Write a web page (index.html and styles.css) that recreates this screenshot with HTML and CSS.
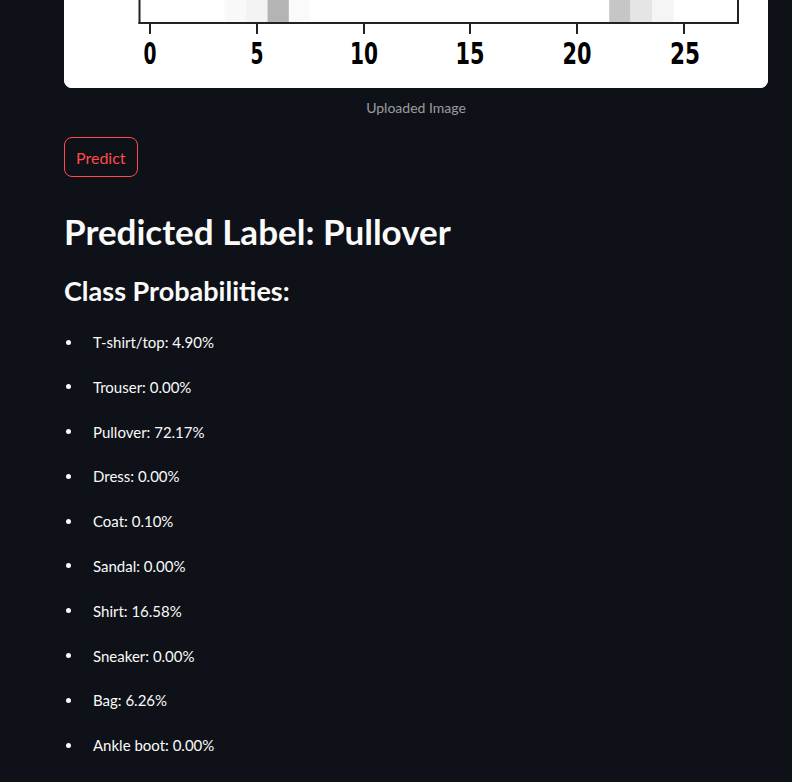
FILE: index.html
```html
<!DOCTYPE html>
<html lang="en">
<head>
<meta charset="utf-8">
<title>Fashion MNIST Classifier</title>
<link rel="stylesheet" href="styles.css">
</head>
<body>
<main class="main">
  <figure class="figure">
    <div class="plot-card">
      <svg class="plot" width="704" height="88" viewBox="0 0 704 88" xmlns="http://www.w3.org/2000/svg">
        <rect x="0" y="0" width="704" height="88" fill="#ffffff"/>
        <rect x="160.7" y="0" width="21.4" height="22" fill="#f9f9f9"/>
        <rect x="182.1" y="0" width="21.4" height="22" fill="#f3f3f3"/>
        <rect x="203.5" y="0" width="21.4" height="22" fill="#b4b4b4"/>
        <rect x="224.9" y="0" width="21.4" height="22" fill="#fafafa"/>
        <rect x="545.2" y="0" width="21.4" height="22" fill="#c6c6c6"/>
        <rect x="566.6" y="0" width="21.4" height="22" fill="#e5e5e5"/>
        <rect x="588" y="0" width="21.4" height="22" fill="#f5f5f5"/>
        <g stroke="#222222" stroke-width="2" fill="none">
          <line x1="75.5" y1="0" x2="75.5" y2="24"/>
          <line x1="674" y1="0" x2="674" y2="24"/>
          <line x1="74.5" y1="23" x2="675" y2="23"/>
          <line x1="86" y1="24" x2="86" y2="34"/>
          <line x1="193" y1="24" x2="193" y2="34"/>
          <line x1="300" y1="24" x2="300" y2="34"/>
          <line x1="406" y1="24" x2="406" y2="34"/>
          <line x1="513" y1="24" x2="513" y2="34"/>
          <line x1="620" y1="24" x2="620" y2="34"/>
        </g>
        <g class="ticklabels" fill="#000000" text-anchor="middle">
          <text x="86" y="64" textLength="13" lengthAdjust="spacingAndGlyphs">0</text>
          <text x="193" y="64" textLength="13" lengthAdjust="spacingAndGlyphs">5</text>
          <text x="300" y="64" textLength="28" lengthAdjust="spacingAndGlyphs">10</text>
          <text x="406" y="64" textLength="29" lengthAdjust="spacingAndGlyphs">15</text>
          <text x="513" y="64" textLength="29" lengthAdjust="spacingAndGlyphs">20</text>
          <text x="621" y="64" textLength="30" lengthAdjust="spacingAndGlyphs">25</text>
        </g>
      </svg>
    </div>
    <figcaption class="caption">Uploaded Image</figcaption>
  </figure>

  <div class="actions">
    <button class="btn-predict" type="button">Predict</button>
  </div>

  <h2 class="result">Predicted Label: Pullover</h2>
  <h3 class="subhead">Class Probabilities:</h3>

  <div class="prob-list">
    <ul class="prob"><li>T-shirt/top: 4.90%</li></ul>
    <ul class="prob"><li>Trouser: 0.00%</li></ul>
    <ul class="prob"><li>Pullover: 72.17%</li></ul>
    <ul class="prob"><li>Dress: 0.00%</li></ul>
    <ul class="prob"><li>Coat: 0.10%</li></ul>
    <ul class="prob"><li>Sandal: 0.00%</li></ul>
    <ul class="prob"><li>Shirt: 16.58%</li></ul>
    <ul class="prob"><li>Sneaker: 0.00%</li></ul>
    <ul class="prob"><li>Bag: 6.26%</li></ul>
    <ul class="prob"><li>Ankle boot: 0.00%</li></ul>
  </div>
</main>
</body>
</html>
```

FILE: styles.css
```css
html, body {
  margin: 0;
  padding: 0;
  background: #0e1117;
  color: #fafafa;
  font-family: Lato, "Noto Sans", sans-serif;
}

.main {
  width: 704px;
  padding: 0 0 40px 64px;
  display: flex;
  flex-direction: column;
}

.figure {
  margin: 0;
  display: flex;
  flex-direction: column;
}

.plot-card {
  width: 704px;
  height: 88px;
  background: #ffffff;
  border-radius: 0 0 8px 8px;
  overflow: hidden;
}

.plot {
  display: block;
}

.ticklabels {
  font-family: "DejaVu Sans", sans-serif;
  font-weight: 700;
  font-size: 30px;
}

.caption {
  margin-top: 10px;
  text-align: center;
  font-size: 14px;
  line-height: 20px;
  color: rgba(250, 250, 250, 0.6);
}

.actions {
  margin-top: 19px;
}

.btn-predict {
  height: 40px;
  padding: 0 11px;
  background: transparent;
  border: 1px solid #ff4b4b;
  border-radius: 8px;
  color: #ff4b4b;
  font-family: Lato, "Noto Sans", sans-serif;
  font-size: 16px;
}

.result {
  margin: 33px 0 0;
  font-size: 35px;
  line-height: 42px;
  font-weight: 700;
  letter-spacing: 0;
}

.subhead {
  margin: 22px 0 0;
  font-size: 27px;
  line-height: 34px;
  font-weight: 700;
  letter-spacing: 0;
}

.prob-list {
  margin-top: 22px;
  display: flex;
  flex-direction: column;
  gap: 20.8px;
}

.prob {
  margin: 0;
  padding: 0;
  list-style: none;
}

.prob li {
  display: flex;
  align-items: center;
  font-size: 15px;
  line-height: 24px;
}

.prob li::before {
  content: "";
  width: 5px;
  height: 5px;
  margin: 0 22px 0 2px;
  border-radius: 50%;
  background: #fafafa;
  flex: none;
}
```
